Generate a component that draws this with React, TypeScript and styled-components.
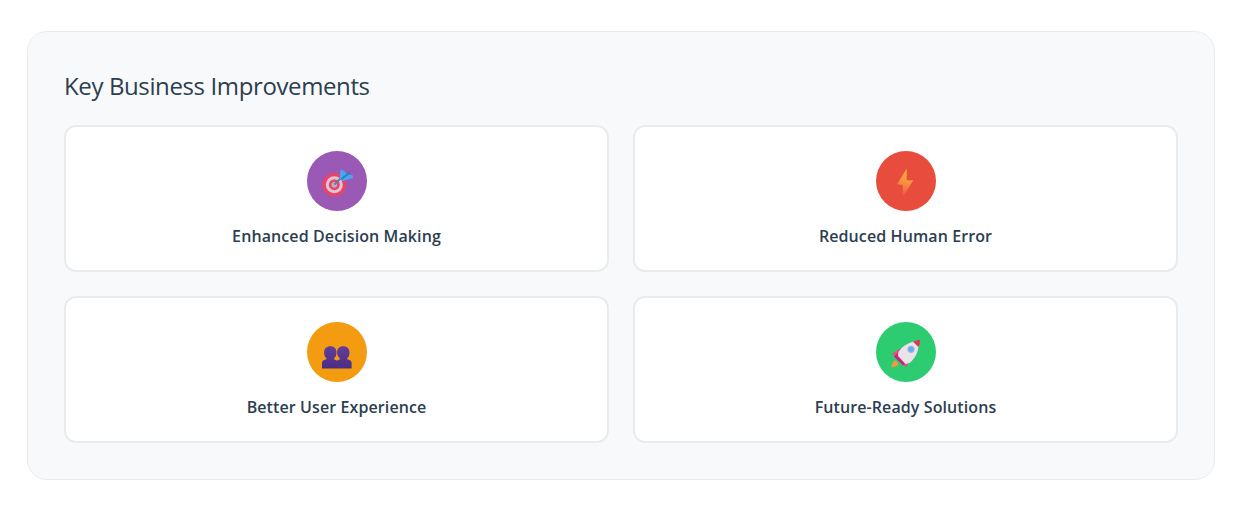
import React from "react";
import styled, { createGlobalStyle } from "styled-components";

const GlobalStyle = createGlobalStyle`
  html, body {
    margin: 0;
    padding: 0;
    background: #ffffff;
  }
  body {
    font-family: "Open Sans", "Noto Sans", "Liberation Sans", sans-serif;
  }
`;

const Page = styled.div`
  padding: 31px 31px 37px 27px;
`;

const Panel = styled.section`
  box-sizing: border-box;
  height: 449px;
  padding: 36px;
  background: #f8f9fa;
  border: 1px solid #e9ecef;
  border-radius: 20px;
`;

const Title = styled.h2`
  margin: 0 0 21px;
  height: 36px;
  font-size: 24px;
  line-height: 36px;
  font-weight: 400;
  letter-spacing: -0.38px;
  color: #2c3e50;
`;

const Grid = styled.div`
  display: grid;
  grid-template-columns: 1fr 1fr;
  gap: 24px;
`;

const Card = styled.div`
  box-sizing: border-box;
  height: 147px;
  padding: 24px 0 0;
  display: flex;
  flex-direction: column;
  align-items: center;
  background: #ffffff;
  border: 2px solid #e9ecef;
  border-radius: 12px;
`;

const IconCircle = styled.div<{ $color: string }>`
  width: 60px;
  height: 60px;
  border-radius: 50%;
  display: flex;
  align-items: center;
  justify-content: center;
  background: ${(p) => p.$color};
`;

const CardLabel = styled.div`
  margin-top: 13px;
  font-size: 16px;
  line-height: 24px;
  font-weight: 600;
  letter-spacing: 0.1px;
  color: #2c3e50;
`;

const Glyph = styled.svg`
  width: 30px;
  height: 30px;
  display: block;
  overflow: visible;
`;

const TargetIcon = () => (
  <Glyph viewBox="0 0 30 30">
    <circle cx="12.3" cy="18.7" r="12" fill="#e8436b" />
    <circle cx="12.3" cy="18.7" r="8.5" fill="#dcc6d6" />
    <circle cx="12.3" cy="18.7" r="5.5" fill="#e5476e" />
    <circle cx="12.3" cy="18.7" r="2.8" fill="#bfb0bf" />
    <path d="M12.5 18.500l8-8" stroke="#66799a" strokeWidth="2" />
    <path d="M17.500 12 18.700 3.500 22 5 25.500 8.500 30.500 9 31 12 20.500 15z" fill="#45a8ec" />
    <path d="M19.500 13 28 6.500" stroke="#2a7fcf" strokeWidth="2" />
  </Glyph>
);

const BoltIcon = () => (
  <Glyph viewBox="0 0 30 30">
    <defs>
      <linearGradient id="bolt" x1="0.6" y1="0" x2="0.4" y2="1">
        <stop offset="0" stopColor="#fdb83c" />
        <stop offset="0.55" stopColor="#f68c3e" />
        <stop offset="1" stopColor="#e8504f" />
      </linearGradient>
    </defs>
    <path d="M15.700 2.700 6 18.300l5.700.7V31L22.300 14.300H15.700z" fill="url(#bolt)" />
  </Glyph>
);

const PeopleIcon = () => (
  <Glyph viewBox="0 0 30 30">
    <defs>
      <linearGradient id="busts" x1="0" y1="0" x2="0" y2="1">
        <stop offset="0" stopColor="#633d9b" />
        <stop offset="1" stopColor="#4a2c86" />
      </linearGradient>
    </defs>
    <path
      d="M8.300 9.300c3.900 0 6.200 2.500 6.200 6.200 0 2.600-.9 4.600-2.300 5.700v1.200l2.800 1V31.500H0v-5.600c0-1.400.7-2.300 2.100-2.900l2.300-.8v-1c-1.400-1.100-2.300-3.100-2.300-5.700 0-3.700 2.300-6.200 6.200-6.200z"
      fill="url(#busts)"
    />
    <path
      d="M21.300 9.300c3.900 0 6.200 2.500 6.200 6.200 0 2.600-.9 4.600-2.300 5.700v1l2.300.8c1.400.6 2.100 1.500 2.100 2.900v5.600H15v-8.100l2.800-1v-1.200c-1.400-1.100-2.700-3.100-2.700-5.700 0-3.700 2.300-6.200 6.200-6.200z"
      fill="url(#busts)"
    />
  </Glyph>
);

const RocketIcon = () => (
  <Glyph viewBox="0 0 30 30">
    <path d="M4 23l4 4c-2 2.500-5 3-7.500 3.300C.5 28 1.500 25 4 23z" fill="#f9963c" />
    <path d="M10 11 1 17 5.500 20.500 10 19z" fill="#ee4a86" />
    <path d="M20 21l-5 9.500L11.500 26l1.500-5z" fill="#ee4a86" />
    <path d="M6 16.500l9 9L12 28.500l-9-9z" fill="#c9237c" />
    <path d="M27.500 4C20 4 12 8 7.500 15L7 19l7.500 8 4-1C25 21 28.500 12 27.500 4z" fill="#e8e4ea" />
    <path d="M22 4.800C24.500 3.500 27 3 29 2.700 29 5 28.500 8 27.400 10z" fill="#ee2d55" />
    <circle cx="20" cy="12.300" r="3.600" fill="#a7b4d4" />
    <circle cx="20" cy="12.300" r="2.500" fill="#5bb0f0" />
  </Glyph>
);

const items = [
  { label: "Enhanced Decision Making", color: "#9b59b6", icon: <TargetIcon /> },
  { label: "Reduced Human Error", color: "#e74c3c", icon: <BoltIcon /> },
  { label: "Better User Experience", color: "#f39c12", icon: <PeopleIcon /> },
  { label: "Future-Ready Solutions", color: "#2ecc71", icon: <RocketIcon /> },
];

const App = () => {
  return (
    <>
      <GlobalStyle />
      <Page>
        <Panel>
          <Title>Key Business Improvements</Title>
          <Grid>
            {items.map((item) => (
              <Card key={item.label}>
                <IconCircle $color={item.color}>{item.icon}</IconCircle>
                <CardLabel>{item.label}</CardLabel>
              </Card>
            ))}
          </Grid>
        </Panel>
      </Page>
    </>
  );
};

export default App;
